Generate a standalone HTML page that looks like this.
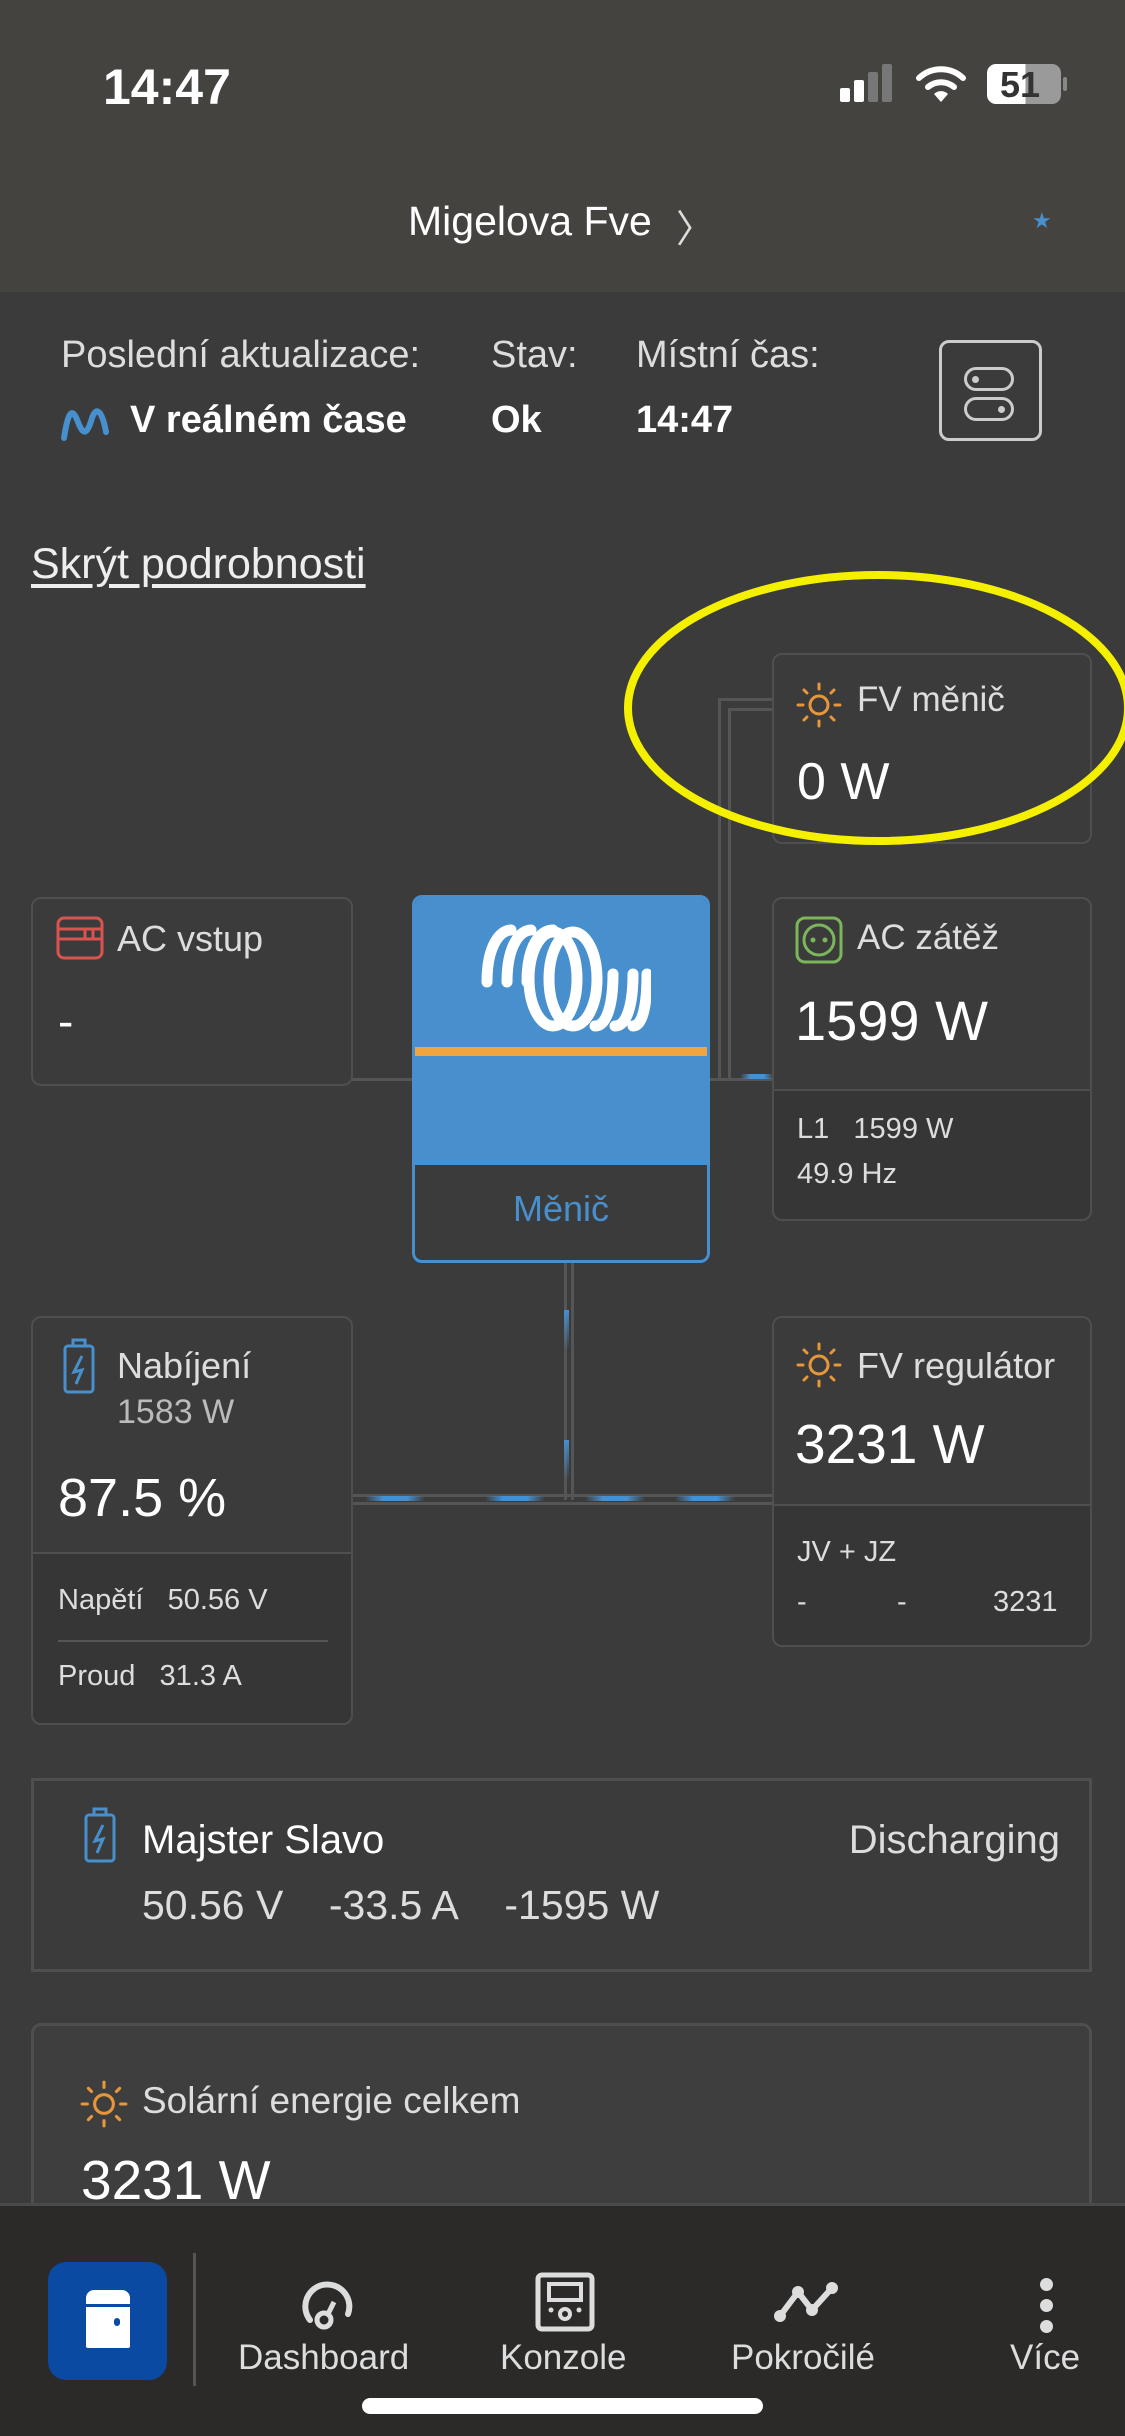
<!DOCTYPE html>
<html><head><meta charset="utf-8">
<style>
*{margin:0;padding:0;box-sizing:border-box}
body{width:1125px;height:2436px;background:#3b3b3b;font-family:"Liberation Sans",sans-serif;color:#fff;position:relative;overflow:hidden}
.a{position:absolute}
.card{position:absolute;border:2px solid #4f4f4f;border-radius:10px;background:#3b3b3b}
.t{position:absolute;white-space:nowrap}
.line{position:absolute;background:#555}
.dash{position:absolute;background:linear-gradient(90deg,rgba(71,143,205,0),#478fcd 30%,#478fcd 70%,rgba(71,143,205,0));height:5px}
</style></head><body>
<!-- header -->
<div class="a" style="left:0;top:0;width:1125px;height:292px;background:#454340"></div>
<div class="t" style="left:103px;top:58px;font-size:50px;font-weight:bold">14:47</div>
<!-- signal -->
<div class="a" style="left:840px;top:88px;width:10px;height:14px;background:#fff;border-radius:2px"></div>
<div class="a" style="left:854px;top:80px;width:10px;height:22px;background:#fff;border-radius:2px"></div>
<div class="a" style="left:868px;top:72px;width:10px;height:30px;background:#777;border-radius:2px"></div>
<div class="a" style="left:882px;top:64px;width:10px;height:38px;background:#777;border-radius:2px"></div>
<svg class="a" style="left:915px;top:64px" width="52" height="40" viewBox="0 0 52 40"><path d="M4 14 A32 32 0 0 1 48 14" stroke="#fff" stroke-width="6" fill="none" stroke-linecap="round"/><path d="M13 23 A20 20 0 0 1 39 23" stroke="#fff" stroke-width="6" fill="none" stroke-linecap="round"/><path d="M19 30 L26 38 L33 30 A10 10 0 0 0 19 30Z" fill="#fff"/></svg>
<div class="a" style="left:987px;top:64px;width:74px;height:40px;border-radius:9px;background:linear-gradient(90deg,#fff 0,#fff 52%,#9a9a9a 52%)"></div>
<div class="a" style="left:1063px;top:77px;width:4px;height:14px;background:#888;border-radius:2px"></div>
<div class="t" style="left:1000px;top:64px;font-size:36px;font-weight:bold;color:#333">51</div>
<div class="t" style="left:408px;top:198px;font-size:41px;color:#fff">Migelova Fve</div>
<div class="t" style="left:676px;top:198px;font-size:38px;color:#ddd">〉</div>
<div class="t" style="left:1032px;top:208px;font-size:22px;color:#478fcd">★</div>
<!-- info row -->
<div class="t" style="left:61px;top:334px;font-size:38px;color:#ddd">Poslední aktualizace:</div>
<div class="t" style="left:491px;top:334px;font-size:38px;color:#ddd">Stav:</div>
<div class="t" style="left:636px;top:334px;font-size:38px;color:#ddd">Místní čas:</div>
<svg class="a" style="left:60px;top:402px" width="50" height="40" viewBox="0 0 50 40"><path d="M4 36 C8 10 12 4 18 20 C24 36 28 30 32 16 C36 4 42 8 46 30" stroke="#478fcd" stroke-width="6" fill="none" stroke-linecap="round"/></svg>
<div class="t" style="left:130px;top:399px;font-size:38px;font-weight:bold">V reálném čase</div>
<div class="t" style="left:491px;top:399px;font-size:38px;font-weight:bold">Ok</div>
<div class="t" style="left:636px;top:399px;font-size:38px;font-weight:bold">14:47</div>
<div class="a" style="left:939px;top:340px;width:103px;height:101px;border:3px solid #ccc;border-radius:10px"></div>
<div class="a" style="left:964px;top:367px;width:50px;height:24px;border:3px solid #ccc;border-radius:12px"></div>
<div class="a" style="left:972px;top:376px;width:7px;height:7px;background:#ccc;border-radius:50%"></div>
<div class="a" style="left:964px;top:397px;width:50px;height:24px;border:3px solid #ccc;border-radius:12px"></div>
<div class="a" style="left:998px;top:406px;width:7px;height:7px;background:#ccc;border-radius:50%"></div>
<div class="t" style="left:31px;top:540px;font-size:43px;text-decoration:underline;text-underline-offset:6px;color:#eee">Skrýt podrobnosti</div>
<!-- connection lines -->
<div class="line" style="left:718px;top:698px;width:3px;height:380px"></div>
<div class="line" style="left:728px;top:708px;width:3px;height:370px"></div>
<div class="line" style="left:718px;top:698px;width:56px;height:3px"></div>
<div class="line" style="left:728px;top:708px;width:46px;height:3px"></div>
<div class="line" style="left:190px;top:1078px;width:585px;height:3px"></div>
<div class="dash" style="left:740px;top:1074px;width:34px"></div>
<div class="line" style="left:564px;top:1260px;width:3px;height:240px"></div>
<div class="line" style="left:571px;top:1260px;width:3px;height:240px"></div>
<div class="line" style="left:353px;top:1494px;width:420px;height:3px"></div>
<div class="line" style="left:353px;top:1502px;width:420px;height:3px"></div>
<div class="a" style="left:564px;top:1310px;width:5px;height:40px;background:linear-gradient(#478fcd,rgba(71,143,205,0))"></div>
<div class="a" style="left:564px;top:1440px;width:5px;height:40px;background:linear-gradient(#478fcd,rgba(71,143,205,0))"></div>
<div class="dash" style="left:365px;top:1496px;width:60px"></div>
<div class="dash" style="left:485px;top:1496px;width:60px"></div>
<div class="dash" style="left:585px;top:1496px;width:60px"></div>
<div class="dash" style="left:675px;top:1496px;width:60px"></div>
<!-- FV měnič -->
<div class="card" style="left:772px;top:653px;width:320px;height:191px"></div>
<svg class="a" style="left:794px;top:680px" width="50" height="50" viewBox="0 0 50 50"><circle cx="25" cy="25" r="9" stroke="#e8963a" stroke-width="3" fill="none"/><g stroke="#e8963a" stroke-width="3" stroke-linecap="round"><path d="M25 4v5M25 41v5M4 25h5M41 25h5M10 10l3 3M37 37l3 3M10 40l3-3M37 13l3-3"/></g></svg>
<div class="t" style="left:857px;top:680px;font-size:35px;color:#ddd">FV měnič</div>
<div class="t" style="left:797px;top:752px;font-size:52px;color:#fff">0 W</div>
<!-- AC vstup -->
<div class="card" style="left:31px;top:897px;width:322px;height:189px"></div>
<svg class="a" style="left:55px;top:913px" width="50" height="50" viewBox="0 0 50 50"><rect x="3" y="5" width="44" height="40" rx="6" stroke="#d9534f" stroke-width="3" fill="none"/><path d="M3 16h44M3 26h44M30 16v10M38 16v10" stroke="#d9534f" stroke-width="3"/></svg>
<div class="t" style="left:117px;top:918px;font-size:36px;color:#ddd">AC vstup</div>
<div class="t" style="left:58px;top:994px;font-size:46px;color:#fff">-</div>
<!-- Měnič -->
<div class="a" style="left:412px;top:895px;width:298px;height:368px;border:3px solid #478fcd;border-radius:10px;background:#3b3b3b;overflow:hidden">
 <div class="a" style="left:0;top:0;width:298px;height:267px;background:#478fcd"></div>
 <div class="a" style="left:0;top:149px;width:298px;height:9px;background:#f0a53f"></div>
 <svg class="a" style="left:66px;top:26px" width="170" height="110" viewBox="0 0 170 110" fill="none" stroke="#fff" stroke-width="11" stroke-linecap="round">
  <path d="M6 58 C6 20 20 6 30 6"/><path d="M26 58 C26 20 40 6 50 6"/><path d="M46 58 C46 20 60 6 72 6"/>
  <ellipse cx="92" cy="55" rx="24" ry="47"/><ellipse cx="72" cy="55" rx="24" ry="47"/>
  <path d="M114 102 C126 102 132 80 132 50"/><path d="M134 102 C146 102 152 80 152 50"/><path d="M152 102 C162 102 166 80 166 50"/>
 </svg>
 <div class="t" style="left:0;width:292px;text-align:center;top:290px;font-size:36px;color:#478fcd">Měnič</div>
</div>
<!-- AC zátěž -->
<div class="card" style="left:772px;top:897px;width:320px;height:324px"></div>
<div class="a" style="left:774px;top:1089px;width:316px;height:130px;background:#363636;border-top:2px solid #4f4f4f;border-radius:0 0 9px 9px"></div>
<svg class="a" style="left:794px;top:915px" width="50" height="50" viewBox="0 0 50 50"><rect x="3" y="3" width="44" height="44" rx="8" stroke="#7cb65a" stroke-width="3" fill="none"/><circle cx="25" cy="25" r="15" stroke="#7cb65a" stroke-width="3" fill="none"/><circle cx="19" cy="25" r="2.5" fill="#7cb65a"/><circle cx="31" cy="25" r="2.5" fill="#7cb65a"/></svg>
<div class="t" style="left:857px;top:918px;font-size:35px;color:#ddd">AC zátěž</div>
<div class="t" style="left:795px;top:988px;font-size:56px;color:#fff">1599 W</div>
<div class="t" style="left:797px;top:1113px;font-size:29px;color:#ddd">L1&nbsp;&nbsp;&nbsp;1599 W</div>
<div class="t" style="left:797px;top:1158px;font-size:29px;color:#ddd">49.9 Hz</div>
<!-- Nabíjení -->
<div class="card" style="left:31px;top:1316px;width:322px;height:409px"></div>
<div class="a" style="left:33px;top:1552px;width:318px;height:171px;background:#363636;border-top:2px solid #4f4f4f;border-radius:0 0 9px 9px"></div>
<svg class="a" style="left:60px;top:1336px" width="40" height="60" viewBox="0 0 40 60"><rect x="5" y="10" width="28" height="46" rx="3" stroke="#478fcd" stroke-width="3" fill="none"/><rect x="13" y="4" width="12" height="6" stroke="#478fcd" stroke-width="3" fill="none"/><path d="M22 20 L14 36 L22 34 L16 48" stroke="#478fcd" stroke-width="3" fill="none"/></svg>
<div class="t" style="left:117px;top:1345px;font-size:36px;color:#ddd">Nabíjení</div>
<div class="t" style="left:117px;top:1393px;font-size:34px;color:#bbb">1583 W</div>
<div class="t" style="left:58px;top:1467px;font-size:54px;color:#fff">87.5 %</div>
<div class="t" style="left:58px;top:1584px;font-size:29px;color:#ddd">Napětí&nbsp;&nbsp;&nbsp;50.56 V</div>
<div class="a" style="left:58px;top:1640px;width:270px;height:2px;background:#555"></div>
<div class="t" style="left:58px;top:1660px;font-size:29px;color:#ddd">Proud&nbsp;&nbsp;&nbsp;31.3 A</div>
<!-- FV regulátor -->
<div class="card" style="left:772px;top:1316px;width:320px;height:331px"></div>
<div class="a" style="left:774px;top:1504px;width:316px;height:141px;background:#363636;border-top:2px solid #4f4f4f;border-radius:0 0 9px 9px"></div>
<svg class="a" style="left:794px;top:1340px" width="50" height="50" viewBox="0 0 50 50"><circle cx="25" cy="25" r="9" stroke="#e8963a" stroke-width="3" fill="none"/><g stroke="#e8963a" stroke-width="3" stroke-linecap="round"><path d="M25 4v5M25 41v5M4 25h5M41 25h5M10 10l3 3M37 37l3 3M10 40l3-3M37 13l3-3"/></g></svg>
<div class="t" style="left:857px;top:1345px;font-size:36px;color:#ddd">FV regulátor</div>
<div class="t" style="left:795px;top:1412px;font-size:55px;color:#fff">3231 W</div>
<div class="t" style="left:797px;top:1536px;font-size:29px;color:#ddd">JV + JZ</div>
<div class="t" style="left:797px;top:1586px;font-size:29px;color:#ddd">-</div>
<div class="t" style="left:897px;top:1586px;font-size:29px;color:#ddd">-</div>
<div class="t" style="left:993px;top:1586px;font-size:29px;color:#ddd">3231</div>
<!-- Majster -->
<div class="a" style="left:31px;top:1778px;width:1061px;height:194px;border:3px solid #4f4f4f"></div>
<svg class="a" style="left:81px;top:1805px" width="40" height="60" viewBox="0 0 40 60"><rect x="5" y="10" width="28" height="46" rx="3" stroke="#478fcd" stroke-width="3" fill="none"/><rect x="13" y="4" width="12" height="6" stroke="#478fcd" stroke-width="3" fill="none"/><path d="M22 20 L14 36 L22 34 L16 48" stroke="#478fcd" stroke-width="3" fill="none"/></svg>
<div class="t" style="left:142px;top:1818px;font-size:40px;color:#fff">Majster Slavo</div>
<div class="t" style="right:65px;top:1818px;font-size:40px;color:#ddd">Discharging</div>
<div class="t" style="left:142px;top:1882px;font-size:41px;color:#ddd">50.56 V&nbsp;&nbsp;&nbsp;&nbsp;-33.5 A&nbsp;&nbsp;&nbsp;&nbsp;-1595 W</div>
<!-- Solar total -->
<div class="a" style="left:31px;top:2023px;width:1061px;height:260px;border:3px solid #4f4f4f;border-radius:10px;background:#3e3e3e"></div>
<svg class="a" style="left:78px;top:2078px" width="52" height="52" viewBox="0 0 50 50"><circle cx="25" cy="25" r="9" stroke="#e8963a" stroke-width="3" fill="none"/><g stroke="#e8963a" stroke-width="3" stroke-linecap="round"><path d="M25 4v5M25 41v5M4 25h5M41 25h5M10 10l3 3M37 37l3 3M10 40l3-3M37 13l3-3"/></g></svg>
<div class="t" style="left:142px;top:2080px;font-size:37px;color:#ddd">Solární energie celkem</div>
<div class="t" style="left:81px;top:2148px;font-size:55px;color:#fff">3231 W</div>
<!-- yellow ellipse -->
<svg class="a" style="left:0;top:0" width="1125" height="1000"><ellipse cx="878" cy="708" rx="250" ry="133" stroke="#f5f000" stroke-width="8" fill="none"/></svg>
<!-- tab bar -->
<div class="a" style="left:0;top:2203px;width:1125px;height:233px;background:#2b2a29;border-top:3px solid #4a4a4a"></div>
<div class="a" style="left:48px;top:2262px;width:119px;height:118px;background:#0b4aa2;border-radius:18px"></div>
<div class="a" style="left:86px;top:2290px;width:44px;height:58px;background:#fff;border-radius:8px 8px 2px 2px"></div>
<div class="a" style="left:86px;top:2304px;width:44px;height:3px;background:#0b4aa2"></div>
<div class="a" style="left:114px;top:2318px;width:6px;height:8px;background:#0b4aa2;border-radius:3px"></div>
<div class="a" style="left:193px;top:2253px;width:3px;height:133px;background:#555"></div>
<svg class="a" style="left:298px;top:2274px" width="60" height="60" viewBox="0 0 60 60"><path d="M12 46 A22 22 0 1 1 50 40" stroke="#ddd" stroke-width="6" fill="none" stroke-linecap="round"/><circle cx="26" cy="46" r="7" stroke="#ddd" stroke-width="5" fill="none"/><path d="M30 40 L36 28" stroke="#ddd" stroke-width="5"/></svg>
<div class="t" style="left:238px;top:2338px;font-size:35px;color:#ddd">Dashboard</div>
<svg class="a" style="left:535px;top:2272px" width="60" height="60" viewBox="0 0 60 60"><rect x="3" y="3" width="54" height="54" rx="4" stroke="#ddd" stroke-width="5" fill="none"/><rect x="14" y="12" width="32" height="16" stroke="#ddd" stroke-width="4" fill="none"/><circle cx="30" cy="42" r="5" stroke="#ddd" stroke-width="4" fill="none"/><circle cx="16" cy="38" r="2.5" fill="#ddd"/><circle cx="44" cy="38" r="2.5" fill="#ddd"/></svg>
<div class="t" style="left:500px;top:2338px;font-size:35px;color:#ddd">Konzole</div>
<svg class="a" style="left:772px;top:2280px" width="70" height="44" viewBox="0 0 70 44"><path d="M8 36 L26 12 L40 30 L60 8" stroke="#ddd" stroke-width="6" fill="none" stroke-linejoin="round"/><circle cx="8" cy="36" r="6" fill="#ddd"/><circle cx="26" cy="12" r="6" fill="#ddd"/><circle cx="40" cy="30" r="6" fill="#ddd"/><circle cx="60" cy="8" r="6" fill="#ddd"/></svg>
<div class="t" style="left:731px;top:2338px;font-size:35px;color:#ddd">Pokročilé</div>
<div class="a" style="left:1040px;top:2278px;width:13px;height:13px;border-radius:50%;background:#ddd"></div>
<div class="a" style="left:1040px;top:2299px;width:13px;height:13px;border-radius:50%;background:#ddd"></div>
<div class="a" style="left:1040px;top:2320px;width:13px;height:13px;border-radius:50%;background:#ddd"></div>
<div class="t" style="left:1010px;top:2338px;font-size:35px;color:#ddd">Více</div>
<div class="a" style="left:362px;top:2398px;width:401px;height:16px;border-radius:8px;background:#fff"></div>
</body></html>
